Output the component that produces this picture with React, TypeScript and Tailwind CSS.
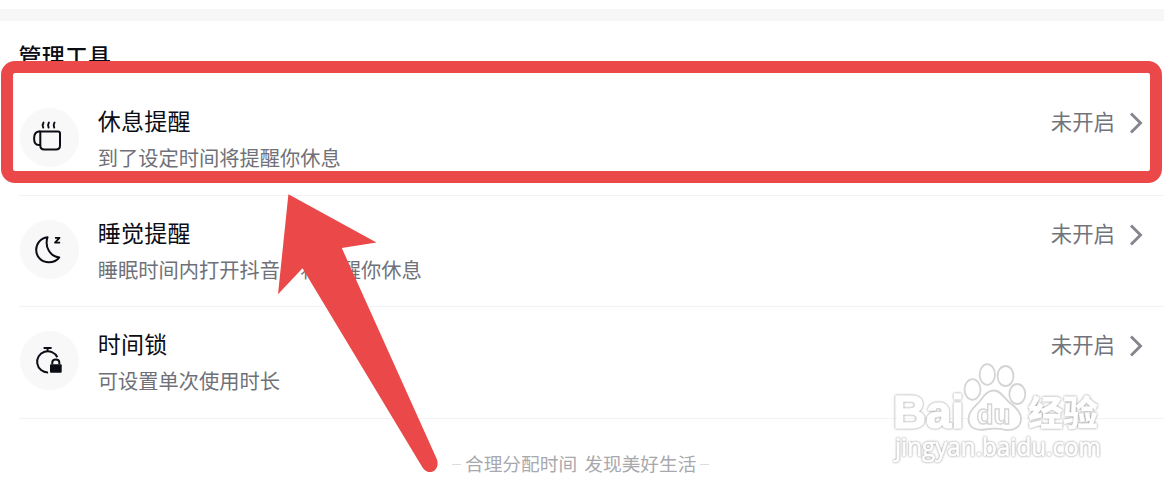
import React from 'react';

const RED = '#EB4949';

export default function App() {
    return (
        <div className="relative h-[488px] w-[1164px] overflow-hidden bg-white pt-[9px] font-['Noto_Sans_CJK_SC',sans-serif] text-[#0b0c14]">
            <div className="h-3 bg-[#f7f7f7]" />
            <h2 className="h-[63px] pt-[17px] pl-[18.5px] text-[23px] leading-[34px] font-medium tracking-[0.2px]">管理工具</h2>

            {/* Tool list */}
            <ToolRow icon={<CupIcon />} title="休息提醒" description="到了设定时间将提醒你休息" className="h-28" />
            <ToolRow icon={<MoonIcon />} title="睡觉提醒" description="睡眠时间内打开抖音，将提醒你休息" className="h-[111px]" />
            <ToolRow icon={<TimerLockIcon />} title="时间锁" description="可设置单次使用时长" className="h-28" />

            {/* Slogan */}
            <div className="flex items-center pt-[31px] pl-[452px] text-[18.7px] leading-7 text-[#a9a9ad]">
                <span className="mt-px mr-1 h-px w-[9px] bg-[#dedee0]" />
                <span className="-mt-px whitespace-nowrap [word-spacing:3px]">合理分配时间 发现美好生活</span>
                <span className="mt-px ml-1 h-px w-[9px] bg-[#dedee0]" />
            </div>

            <Watermark />

            {/* Highlight frame and arrow */}
            <div className="absolute top-[61px] left-[1px] h-[122px] w-[1161px] rounded-[14px] border-[12px] border-[#eb4949]" />
            <svg className="absolute top-[190px] left-[270px]" width="180" height="290" viewBox="270 190 180 290" fill={RED}>
                <path d="M288.4 194.3 376.5 242.5 341.8 248 437 459.5C439 466 436 472 429.5 472 426 472 424 469.5 422.5 467.5L302.5 268.3 278 294.2Z" />
            </svg>
        </div>
    );
}

type ToolRowProps = { icon: React.ReactNode; title: string; description: string; className: string };

function ToolRow({ icon, title, description, className }: ToolRowProps) {
    return (
        <div className={`ml-[19px] flex items-start border-b border-[#f3f3f3] ${className}`}>
            <div className="mt-[23.5px] ml-[0.5px] flex size-[59px] items-center justify-center rounded-full bg-[#f8f8f8]">{icon}</div>
            <div className="ml-[19.3px] pt-5 whitespace-nowrap">
                <h3 className="text-[23px] leading-[32px] tracking-[0.2px]">{title}</h3>
                <p className="pt-2 text-[20.25px] leading-[28px] text-[#707178]">{description}</p>
            </div>
            <div className="mt-[22px] mr-[21px] ml-auto flex h-8 items-center text-[21.4px] text-[#73747b]">
                <span className="-mt-0.5">未开启</span>
                <svg className="mt-0.5 ml-[14px]" width="14" height="22" viewBox="0 0 14 22" fill="none" stroke="#85868d" strokeWidth="2.9">
                    <path d="M2 1.5 11.5 11 2 20.5" />
                </svg>
            </div>
        </div>
    );
}

function CupIcon() {
    return (
        <svg width="59" height="59" viewBox="0.5 0.4 59 59" fill="none" stroke="#0b0c14" strokeWidth="2" strokeLinecap="round">
            <path d="M20.8 24H38.5Q40.5 24 40.5 26V38Q40.5 42 36.5 42H24.8Q20.8 42 20.8 38Z" />
            <path d="M20.3 24H19.3Q14.6 24.5 14.6 31T19.3 37.5H20.3" />
            <path d="M24 15Q22.4 17.3 23.7 20M29.4 15Q27.9 17.3 29.1 20M35 15Q33.5 17.3 34.7 20" strokeWidth="1.9" />
        </svg>
    );
}

function MoonIcon() {
    return (
        <svg width="59" height="59" viewBox="0.5 0 59 59" fill="none" stroke="#0b0c14" strokeWidth="2" strokeLinejoin="round">
            <path d="M28 17.2C20.8 18 16.7 24 16.7 30 16.7 37 22.3 42.3 29.3 42.3 34 42.3 37.8 40.3 39.7 37.4 31 36.5 24.8 27.5 28 17.2Z" />
            <path d="M35.5 17.8H40L35.5 22.6H40.6" strokeWidth="1.8" />
        </svg>
    );
}

function TimerLockIcon() {
    return (
        <svg width="59" height="59" viewBox="0.7 -0.7 59 59" fill="none" stroke="#0b0c14" strokeWidth="2">
            <path d="M24.3 16.2H32.3M28.3 16.5V20M28.8 40.7A10.6 10.6 0 1 1 38 25.5" />
            <path d="M33 32.5V30.5Q33 27.7 36.5 27.7T40 30.5V32.5" />
            <rect x="30.7" y="32.5" width="11.7" height="8.5" rx="1" fill="#0b0c14" stroke="none" />
        </svg>
    );
}

function Watermark() {
    return (
        <svg className="absolute top-[355px] left-[880px]" width="240" height="120" viewBox="880 355 240 120" fill="#fff" opacity=".85">
            <g className="drop-shadow-[0_0_1px_#777]" fontFamily="Liberation Sans, sans-serif" fontWeight="700" stroke="#fff" strokeWidth="1.6" strokeLinejoin="round">
                <text x="893" y="428" fontSize="46" textLength="71" lengthAdjust="spacingAndGlyphs">Bai</text>
                <text x="1028" y="425.5" fontSize="35" textLength="70" lengthAdjust="spacingAndGlyphs" fontFamily="Noto Sans CJK SC, sans-serif" fontWeight="900" strokeWidth=".3">经验</text>
                <text x="895" y="456" fontSize="25" textLength="206" lengthAdjust="spacingAndGlyphs" fontFamily="Open Sans, sans-serif" fontWeight="400" strokeWidth=".7">jingyan.baidu.com</text>
            </g>
            <g stroke="#cdcdcd" strokeWidth="1.8">
                <ellipse cx="972.5" cy="389.5" rx="8" ry="10.3" />
                <ellipse cx="987.3" cy="374.5" rx="7.7" ry="10.3" />
                <ellipse cx="1005.5" cy="376" rx="8" ry="10" />
                <ellipse cx="1017.3" cy="394" rx="8" ry="10" />
                <path d="M994 390.5C1001 390.5 1004 398 1010 403 1017 408 1021 413 1021 419 1021 427 1014 430.5 1006 430 1000 428.5 991 428.5 985 429.5 974 431.5 968.5 426 968.5 419 968.5 411 975 407 980 401 984 396 987 390.5 994 390.5Z" />
                <text x="976.5" y="423.5" fontFamily="Liberation Sans, sans-serif" fontSize="28" fontWeight="700" textLength="34" lengthAdjust="spacingAndGlyphs" strokeWidth="1.4">du</text>
            </g>
        </svg>
    );
}
